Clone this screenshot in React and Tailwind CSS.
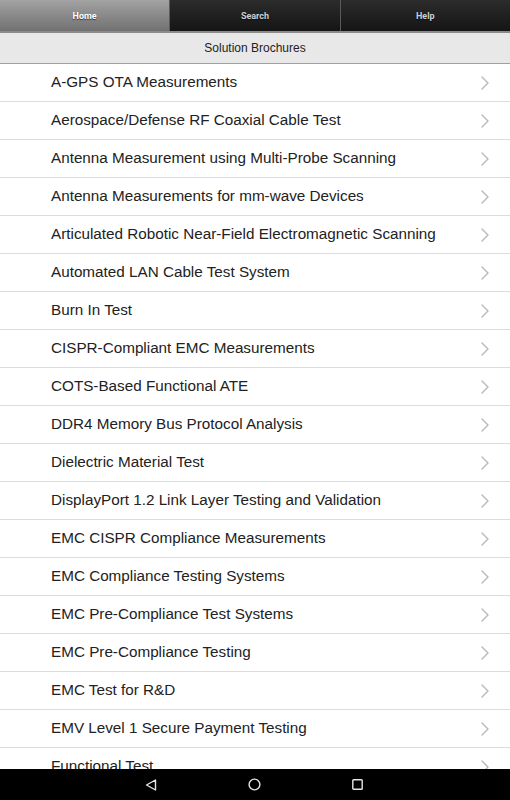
const items = [
  'A-GPS OTA Measurements',
  'Aerospace/Defense RF Coaxial Cable Test',
  'Antenna Measurement using Multi-Probe Scanning',
  'Antenna Measurements for mm-wave Devices',
  'Articulated Robotic Near-Field Electromagnetic Scanning',
  'Automated LAN Cable Test System',
  'Burn In Test',
  'CISPR-Compliant EMC Measurements',
  'COTS-Based Functional ATE',
  'DDR4 Memory Bus Protocol Analysis',
  'Dielectric Material Test',
  'DisplayPort 1.2 Link Layer Testing and Validation',
  'EMC CISPR Compliance Measurements',
  'EMC Compliance Testing Systems',
  'EMC Pre-Compliance Test Systems',
  'EMC Pre-Compliance Testing',
  'EMC Test for R&D',
  'EMV Level 1 Secure Payment Testing',
  'Functional Test',
];

const Tab = ({ label, active }) => (
  <div
    className={`flex-1 flex items-center justify-center pt-[2px] text-[9px] font-bold [text-shadow:0_1px_1px_rgba(0,0,0,0.6)] font-['Roboto','Liberation_Sans',sans-serif] ${
      active
        ? 'bg-gradient-to-b from-[#a3a3a3] to-[#717171] text-white'
        : 'bg-gradient-to-b from-[#2c2c2c] to-[#151515] border-l border-[#5a5a5a] text-[#cfcfcf]'
    }`}
  >
    {label}
  </div>
);

const Chevron = () => (
  <svg width="8" height="14" viewBox="0 0 8 14" fill="none" stroke="#b8b8b8" strokeWidth="1.4">
    <path d="M1 1 L7 7 L1 13" strokeLinecap="round" strokeLinejoin="round" />
  </svg>
);

const App = () => {
  return (
    <div className="w-[510px] h-[800px] flex flex-col overflow-hidden bg-white font-['Liberation_Sans',Arial,sans-serif]">
      {/* Tab bar */}
      <div className="flex h-[31px] shrink-0 bg-black">
        <Tab label="Home" active />
        <Tab label="Search" />
        <Tab label="Help" />
      </div>
      <div className="h-[2px] shrink-0 bg-[#8a8a8a]" />

      {/* Section header */}
      <div className="h-[31px] shrink-0 flex items-center justify-center bg-[#e8e8e8] border-b border-[#a0a0a0] text-[12px] text-[#222]">
        Solution Brochures
      </div>

      {/* List */}
      <div className="flex-1 overflow-hidden">
        {items.map((item) => (
          <div
            key={item}
            className="h-[38px] flex items-center justify-between pl-[51px] pr-[21px] border-b border-[#dcdcdc]"
          >
            <span className="text-[15.25px] text-[#222]">{item}</span>
            <Chevron />
          </div>
        ))}
      </div>

      {/* Android nav bar */}
      <div className="h-[31px] shrink-0 bg-black flex items-center justify-center">
        <div className="flex items-center gap-[91px] pr-[2px]">
          <svg width="12" height="12" viewBox="0 0 12 12" fill="none" stroke="#e6e6e6" strokeWidth="1.4">
            <path d="M10.5 1 L1.5 6 L10.5 11 Z" strokeLinejoin="round" />
          </svg>
          <svg width="13" height="13" viewBox="0 0 13 13" fill="none" stroke="#e6e6e6" strokeWidth="1.4">
            <circle cx="6.5" cy="6.5" r="5.4" />
          </svg>
          <svg width="11" height="11" viewBox="0 0 11 11" fill="none" stroke="#e6e6e6" strokeWidth="1.4">
            <rect x="0.8" y="0.8" width="9.4" height="9.4" rx="0.8" />
          </svg>
        </div>
      </div>
    </div>
  );
};

export default App;
